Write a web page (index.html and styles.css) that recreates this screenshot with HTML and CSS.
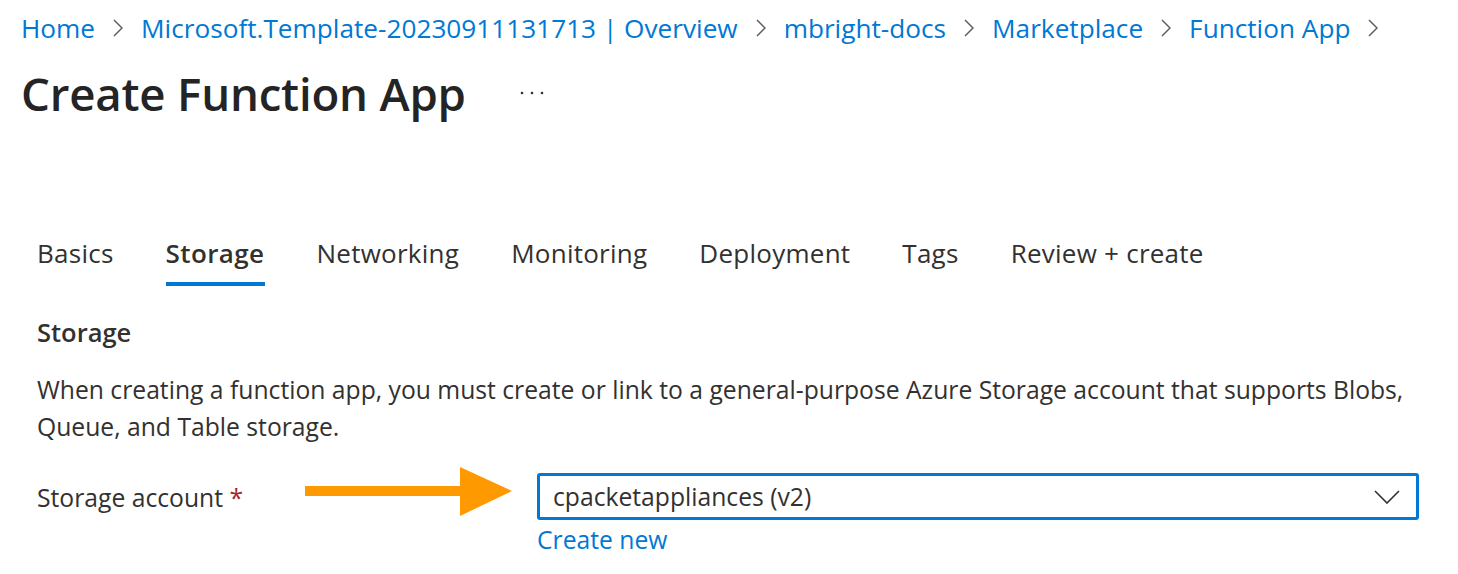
FILE: index.html
```html
<!DOCTYPE html>
<html lang="en">
<head>
<meta charset="utf-8">
<title>Create Function App</title>
<link rel="stylesheet" href="styles.css">
</head>
<body>
<nav class="breadcrumb">
  <a class="crumb" href="#">Home</a>
  <svg class="sep" width="10" height="18" viewBox="0 0 10 18"><path d="M1 1 L9 9 L1 17" fill="none" stroke="#605e5c" stroke-width="1.5"/></svg>
  <a class="crumb" href="#">Microsoft.Template-20230911131713 | Overview</a>
  <svg class="sep" width="10" height="18" viewBox="0 0 10 18"><path d="M1 1 L9 9 L1 17" fill="none" stroke="#605e5c" stroke-width="1.5"/></svg>
  <a class="crumb" href="#">mbright-docs</a>
  <svg class="sep" width="10" height="18" viewBox="0 0 10 18"><path d="M1 1 L9 9 L1 17" fill="none" stroke="#605e5c" stroke-width="1.5"/></svg>
  <a class="crumb" href="#">Marketplace</a>
  <svg class="sep" width="10" height="18" viewBox="0 0 10 18"><path d="M1 1 L9 9 L1 17" fill="none" stroke="#605e5c" stroke-width="1.5"/></svg>
  <a class="crumb" href="#">Function App</a>
  <svg class="sep" width="10" height="18" viewBox="0 0 10 18"><path d="M1 1 L9 9 L1 17" fill="none" stroke="#605e5c" stroke-width="1.5"/></svg>
</nav>

<header class="title-row">
  <h1 class="title">Create Function App</h1>
  <svg class="more" width="24" height="6" viewBox="0 0 24 6"><circle cx="2" cy="3" r="1.3" fill="#323130"/><circle cx="12" cy="3" r="1.3" fill="#323130"/><circle cx="22" cy="3" r="1.3" fill="#323130"/></svg>
</header>

<main class="content">
  <div class="tabs">
    <span class="tab">Basics</span>
    <span class="tab active">Storage</span>
    <span class="tab">Networking</span>
    <span class="tab">Monitoring</span>
    <span class="tab">Deployment</span>
    <span class="tab">Tags</span>
    <span class="tab">Review + create</span>
  </div>

  <h2 class="section-title">Storage</h2>
  <p class="desc">When creating a function app, you must create or link to a general-purpose Azure Storage account that supports Blobs, Queue, and Table storage.</p>

  <div class="form-row">
    <div class="label">Storage account <span class="req">*</span></div>
    <div class="arrow-cell">
      <svg class="arrow" width="210" height="50" viewBox="0 0 210 50"><rect x="0" y="19" width="160" height="10" fill="#ff9900"/><polygon points="155,0 207,24 155,49" fill="#ff9900"/></svg>
    </div>
    <div class="field">
      <div class="select">
        <span class="select-value">cpacketappliances (v2)</span>
        <svg class="chev" width="26" height="14" viewBox="0 0 26 14"><path d="M1 1 L13 13 L25 1" fill="none" stroke="#323130" stroke-width="1.6"/></svg>
      </div>
      <a class="link" href="#">Create new</a>
    </div>
  </div>
</main>
</body>
</html>
```

FILE: styles.css
```css
html, body {
  margin: 0;
  padding: 0;
  background: #ffffff;
}
body {
  font-family: "Open Sans", "Noto Sans", "Liberation Sans", sans-serif;
  color: #323130;
}
a { text-decoration: none; }

.breadcrumb {
  display: flex;
  align-items: center;
  gap: 18px;
  height: 36px;
  margin-top: 10px;
  padding-left: 21px;
  font-size: 26.2px;
}
.crumb { color: #0078d4; white-space: nowrap; }
.sep { flex: none; }

.title-row {
  display: flex;
  align-items: center;
  gap: 54px;
  height: 60px;
  margin-top: 17px;
  padding-left: 21px;
}
.title {
  margin: 0;
  font-size: 45.6px;
  font-weight: 600;
  color: #242424;
  letter-spacing: -0.2px;
}

.content { padding-left: 37px; }

.tabs {
  display: flex;
  gap: 52px;
  margin-top: 112px;
  font-size: 26px;
  letter-spacing: 0.25px;
}
.tab {
  padding-bottom: 11px;
  border-bottom: 4px solid transparent;
  line-height: 36px;
  white-space: nowrap;
}
.tab.active {
  font-weight: 600;
  letter-spacing: 0.4px;
  border-bottom-color: #0078d4;
}

.section-title {
  margin: 28px 0 0;
  font-size: 25.5px;
  font-weight: 600;
  line-height: 36px;
}
.desc {
  margin: 21px 0 0;
  font-size: 24.7px;
  line-height: 37px;
  max-width: 1400px;
}

.form-row {
  display: flex;
  align-items: flex-start;
  margin-top: 28px;
}
.label {
  width: 268px;
  font-size: 24.7px;
  line-height: 46px;
  margin-top: 2px;
}
.req { color: #a4262c; }
.arrow-cell { width: 232px; margin-top: -6px; }
.field { display: flex; flex-direction: column; }
.select {
  box-sizing: border-box;
  width: 882px;
  height: 47px;
  border: 3px solid #0078d4;
  border-radius: 3px;
  display: flex;
  align-items: center;
  justify-content: space-between;
  padding: 0 16px 0 13px;
  font-size: 24.7px;
}
.link {
  color: #0078d4;
  font-size: 24.7px;
  line-height: 40px;
}
```
